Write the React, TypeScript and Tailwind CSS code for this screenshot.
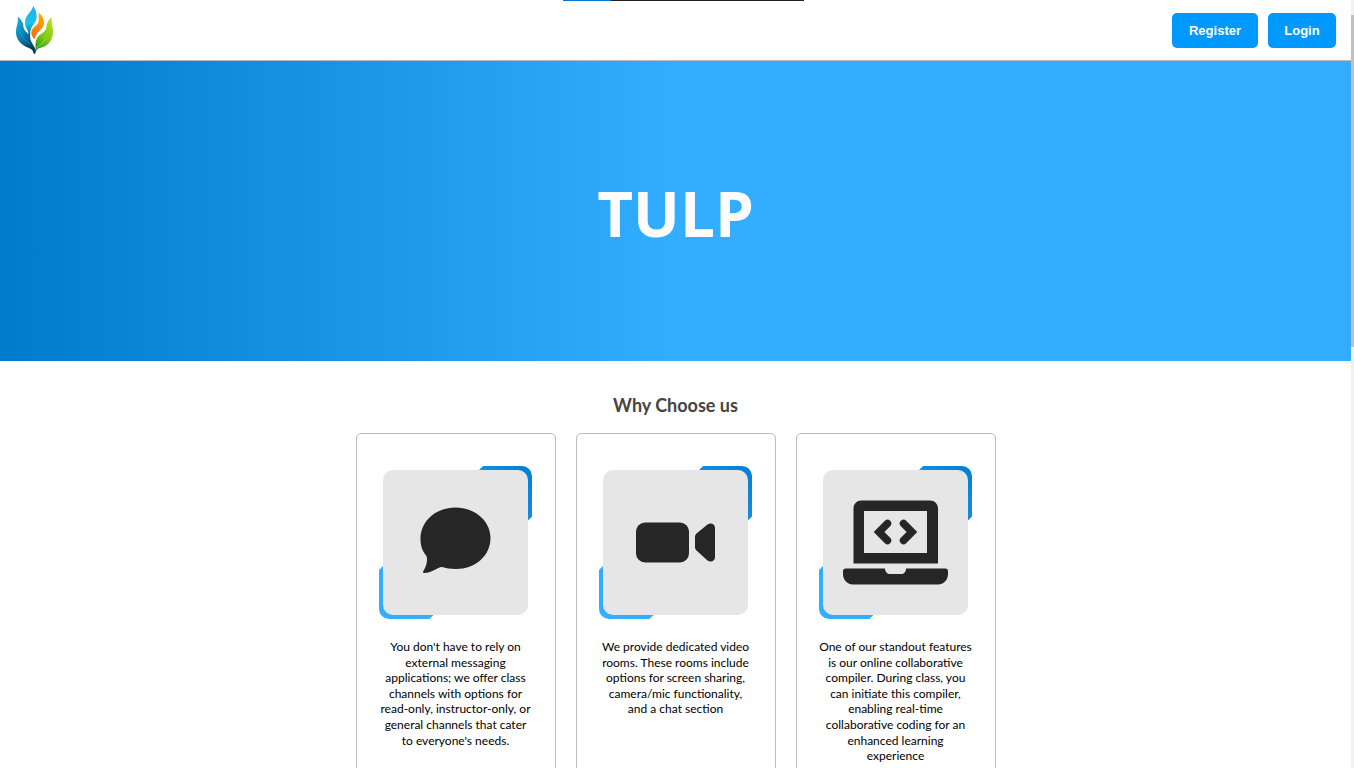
import type { ReactNode } from "react";

function Logo() {
  return (
    <svg viewBox="45 15 117 150" className="h-[50px] w-[39px]" role="img" aria-label="Tulp">
      <defs>
        <linearGradient id="leafBlue" x1="0" y1="0" x2="0.5" y2="1">
          <stop offset="0" stopColor="#1fb4e0" />
          <stop offset="0.5" stopColor="#0b86b8" />
          <stop offset="1" stopColor="#073a5c" />
        </linearGradient>
        <linearGradient id="leafSky" x1="0" y1="0" x2="0" y2="1">
          <stop offset="0" stopColor="#18b4e4" />
          <stop offset="0.6" stopColor="#16c4f0" />
          <stop offset="1" stopColor="#0a6f9c" />
        </linearGradient>
        <linearGradient id="leafOrange" x1="0" y1="0" x2="0" y2="1">
          <stop offset="0" stopColor="#ffb400" />
          <stop offset="1" stopColor="#f4660c" />
        </linearGradient>
        <linearGradient id="leafGreen" x1="0.8" y1="0" x2="0.3" y2="1">
          <stop offset="0" stopColor="#c3e01c" />
          <stop offset="0.6" stopColor="#7cc918" />
          <stop offset="1" stopColor="#2e9c1c" />
        </linearGradient>
      </defs>
      <path
        d="M53 50 C62 56 70 66 70 78 C70 88 79 95 85 103 C86 99 83 92 87 86 C92 95 90 107 91 117 C94 130 104 140 108 150 L106 161 L101 161 C99 152 96 147 87 144 C67 137 49 122 48 99 C47 81 56 70 53 50 Z"
        fill="url(#leafBlue)"
      />
      <path
        d="M100 18 C110 33 113 52 107 64 C102 74 91 80 90 104 L88 104 C86 92 75 84 75 67 C75 46 94 38 100 18 Z"
        fill="url(#leafSky)"
      />
      <path
        d="M117 38 C130 49 135 64 130 78 C124 91 107 97 104 118 C94 109 91 97 97 88 C103 78 115 75 116 63 C118 54 113 47 117 38 Z"
        fill="url(#leafOrange)"
      />
      <path
        d="M155 51 C154 70 160 81 159 98 C158 122 143 137 126 142 C118 145 111 146 109 153 C105 137 105 121 114 110 C121 101 137 98 139 82 C140 68 146 59 155 51 Z"
        fill="url(#leafGreen)"
      />
      <path d="M110 144 C119 134 132 128 140 113" fill="none" stroke="#c9e83a" strokeWidth="2" />
      <path d="M57 84 C59 105 73 122 91 132" fill="none" stroke="#1aa3cf" strokeWidth="2" />
    </svg>
  );
}

function ChatIcon() {
  return (
    <svg viewBox="0 0 145 145" className="size-full" fill="#262626" aria-hidden="true">
      <path d="M72.500 37.500 C92 37.500 107.500 51 107.500 68 C107.500 86 92 99 73 99 C67 99 63 98 59 97 C54 97 50 103 41 103 C39.500 103 40 101 41 100 C43 96 45 91 43.500 86 C39 81 37.500 75 37.500 69 C37.500 51 53 37.500 72.500 37.500 Z" />
    </svg>
  );
}

function VideoIcon() {
  return (
    <svg viewBox="0 0 145 145" className="size-full" fill="#262626" aria-hidden="true">
      <rect x="33" y="52.500" width="53" height="40" rx="9" />
      <path d="M92 67 C92 65.500 92.500 64.500 93.500 63.500 L104.500 54.500 C107.500 52.300 112 53.500 112 58 V87 C112 91 108 93 104.500 90.500 L93.500 80.500 C92.500 79.500 92 78.500 92 77.500 Z" />
    </svg>
  );
}

function CompilerIcon() {
  return (
    <svg viewBox="0 0 145 145" className="size-full" fill="#262626" aria-hidden="true">
      <path
        fillRule="evenodd"
        d="M38.500 30.500 H107 C111.500 30.500 115 34 115 38.500 V93.500 H30.500 V38.500 C30.500 34 34 30.500 38.500 30.500 Z M41 41 V83 H104 V41 Z"
      />
      <path
        d="M64.500 53.500 L56 62 L64.500 70.500 M80.500 53.500 L89 62 L80.500 70.500"
        fill="none"
        stroke="#262626"
        strokeWidth="7.500"
        strokeLinecap="round"
      />
      <path d="M22.500 98.500 H62 C62 102 64.500 104 67 104 H78 C81 104 83 102 83 98.500 H122.500 C124 98.500 125 99.500 125 101 V104 C125 110 120.500 114.500 115 114.500 H30 C24.500 114.500 20 110 20 104 V101 C20 99.500 21 98.500 22.500 98.500 Z" />
    </svg>
  );
}

type Feature = { id: string; icon: ReactNode; text: string };

const features: Feature[] = [
  {
    id: "chat",
    icon: <ChatIcon />,
    text: "You don't have to rely on external messaging applications; we offer class channels with options for read-only, instructor-only, or general channels that cater to everyone's needs.",
  },
  {
    id: "video",
    icon: <VideoIcon />,
    text: "We provide dedicated video rooms. These rooms include options for screen sharing, camera/mic functionality, and a chat section",
  },
  {
    id: "compiler",
    icon: <CompilerIcon />,
    text: "One of our standout features is our online collaborative compiler. During class, you can initiate this compiler, enabling real-time collaborative coding for an enhanced learning experience",
  },
];

function FeatureCard({ icon, text }: { icon: ReactNode; text: string }) {
  return (
    <li className="flex w-[200px] flex-col items-center rounded-[5px] border border-[#bbbbbb] px-[22px] pt-8 pb-10">
      <div className="grid">
        <div className="col-start-1 row-start-1 rounded-[10px] bg-linear-to-tr from-[#33adff] from-40% to-[#007fd4] [clip-path:polygon(68%_0,100%_0,100%_33%,33%_100%,0_100%,0_68%)]" />
        <div className="z-10 col-start-1 row-start-1 m-1 size-[145px] rounded-[10px] bg-[#e6e6e6]">{icon}</div>
      </div>
      <p className="mt-5 text-center text-[12px] leading-[1.3] text-black">{text}</p>
    </li>
  );
}

const navButton = "min-w-[68px] rounded-[5px] bg-[#0099ff] px-4 pt-2 pb-[7px] leading-5";

export default function App() {
  return (
    <div className="relative h-screen overflow-hidden bg-white pr-[3px] font-[Lato,sans-serif]">
      <header className="flex h-[61px] items-center justify-between border-b border-[#bbbbbb] px-[15px]">
        <a href="#home">
          <Logo />
        </a>
        <nav className="flex gap-2.5 font-['Liberation_Sans',sans-serif] text-[13px] font-bold text-white">
          <button type="button" className={`${navButton} min-w-[86px]`}>
            Register
          </button>
          <button type="button" className={navButton}>
            Login
          </button>
        </nav>
      </header>

      <main>
        <section className="flex h-[300px] items-center justify-center bg-linear-to-r/srgb from-[#007acc] to-[#33adff] to-50% pt-1">
          <h1 className="font-['Open_Sans',sans-serif] text-[62px] font-bold text-[#fcfcfc]">TULP</h1>
        </section>

        <section className="flex flex-col items-center pt-8">
          <h2 className="text-[18px] leading-6 font-bold text-[#444444]">Why Choose us</h2>
          <ul className="mt-4 flex min-h-[380px] gap-5">
            {features.map((feature) => (
              <FeatureCard key={feature.id} icon={feature.icon} text={feature.text} />
            ))}
          </ul>
        </section>
      </main>

      <div className="absolute inset-x-0 top-0 flex justify-center pl-[13px]" aria-hidden="true">
        <div className="h-px w-12 bg-[#0078d4]" />
        <div className="h-px w-[193px] bg-[#222222]" />
      </div>
      <div className="absolute inset-y-0 right-0 w-[3px] bg-[#f1f1f1] pt-[15px]" aria-hidden="true">
        <div className="h-[332px] bg-[#c1c1c1]" />
      </div>
    </div>
  );
}
